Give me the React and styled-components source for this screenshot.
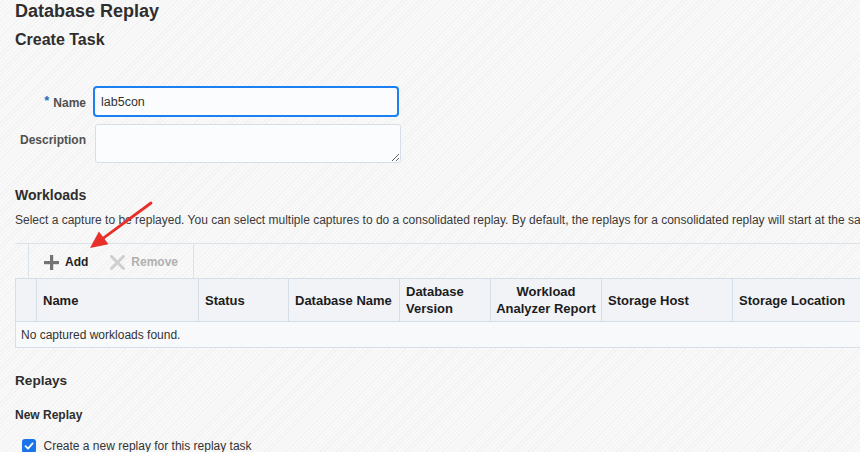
import React from 'react';
import styled, { createGlobalStyle } from 'styled-components';

const GlobalStyle = createGlobalStyle`
  html, body {
    margin: 0;
    padding: 0;
    overflow: hidden;
  }
  body {
    font-family: "Liberation Sans", Arial, Helvetica, sans-serif;
    color: #333;
    background-color: #f6f6f6;
    background-image: repeating-linear-gradient(
      135deg,
      #f9f9f9 0px,
      #f9f9f9 2px,
      #f2f2f2 2px,
      #f2f2f2 3px
    );
  }
`;

const Page = styled.div`
  position: relative;
  width: 860px;
  height: 452px;
  overflow: hidden;
  padding-left: 15px;
  box-sizing: border-box;
`;

const Title = styled.h1`
  margin: 0;
  font-size: 18px;
  line-height: 22px;
  font-weight: bold;
  color: #2e2e2e;
`;

const SubTitle = styled.h2`
  margin: 7.5px 0 0;
  font-size: 16px;
  line-height: 20px;
  font-weight: bold;
  color: #2e2e2e;
`;

const Form = styled.div`
  display: grid;
  grid-template-columns: 71px 310px;
  column-gap: 7px;
  row-gap: 7px;
  margin-top: 36.5px;
  margin-left: -15px;
  padding-left: 15px;
`;

const Label = styled.label`
  font-size: 12px;
  font-weight: bold;
  color: #505050;
  text-align: right;
  align-self: ${p => (p.top ? 'start' : 'center')};
  padding-top: ${p => (p.top ? '9px' : '0')};
  white-space: nowrap;
`;

const Required = styled.span`
  color: #1c6fc2;
  font-size: 13px;
  margin-right: 4px;
  vertical-align: 2px;
`;

const TextInput = styled.input`
  width: 306px;
  height: 31px;
  box-sizing: border-box;
  border: 2px solid #1c80f2;
  border-radius: 4px;
  background: #fbfcfe;
  padding: 0 6px;
  font-family: inherit;
  font-size: 12.5px;
  color: #333;
  outline: none;
`;

const TextArea = styled.textarea`
  width: 306px;
  height: 38.5px;
  box-sizing: border-box;
  margin-left: 1.5px;
  border: 1px solid #d8dee5;
  border-radius: 3px;
  background: #fbfcfe;
  font-family: inherit;
  outline: none;
  display: block;
`;

const SectionTitle = styled.h3`
  margin: ${p => p.mt}px 0 0;
  font-size: ${p => p.size || 14}px;
  line-height: 18px;
  font-weight: bold;
  color: #2e2e2e;
`;

const Hint = styled.p`
  margin: 8.2px 0 0;
  font-size: 12px;
  line-height: 16px;
  color: #3a3a3a;
  white-space: nowrap;
`;

const Toolbar = styled.div`
  display: flex;
  height: 35.5px;
  margin-top: 14.4px;
  width: 1000px;
  border-top: 1px solid #dbe2e8;
  box-sizing: border-box;
`;

const ToolbarLead = styled.div`
  width: 13px;
  border-right: 1px solid #dbe2e8;
`;

const ToolGroup = styled.div`
  display: flex;
  align-items: center;
  gap: 22px;
  padding: 2px 15px 0 15px;
  border-right: 1px solid #dbe2e8;
`;

const ToolButton = styled.button`
  display: flex;
  align-items: center;
  gap: 6px;
  padding: 0;
  border: none;
  background: none;
  font-family: inherit;
  font-size: 12px;
  font-weight: bold;
  color: ${p => (p.disabled ? '#b0b0b0' : '#1e1e1e')};
  cursor: ${p => (p.disabled ? 'default' : 'pointer')};
`;

const Table = styled.table`
  border-collapse: collapse;
  table-layout: fixed;
  width: 917px;
  border: 1px solid #d6dfe7;
`;

const HeadCell = styled.th`
  height: 43px;
  padding: 0 ${p => (p.center ? 5 : 6)}px;
  background: #f1f3f7;
  border-right: 1px solid #d6dfe7;
  border-bottom: 1px solid #d6dfe7;
  font-size: 13px;
  line-height: 17px;
  font-weight: bold;
  color: #1c1c1c;
  text-align: ${p => (p.center ? 'center' : 'left')};
  vertical-align: middle;
  box-sizing: border-box;
`;

const EmptyCell = styled.td`
  height: 26px;
  padding: 0 5px;
  background: #f8f9fb;
  font-size: 12px;
  color: #333;
  box-sizing: border-box;
`;

const CheckRow = styled.label`
  display: flex;
  align-items: center;
  gap: 7.5px;
  margin-top: 14.2px;
  padding-left: 7px;
  font-size: 12px;
  line-height: 15px;
  color: #333;
`;

const CheckBox = styled.span`
  width: 14px;
  height: 14px;
  border-radius: 3px;
  background: #1a73e8;
  display: flex;
  align-items: center;
  justify-content: center;
`;

const Overlay = styled.svg`
  position: absolute;
  left: 0;
  top: 0;
  pointer-events: none;
`;

const PlusIcon = () => (
  <svg width="15" height="15" viewBox="0 0 15 15">
    <rect x="6" y="0" width="3.2" height="15" fill="#747474" />
    <rect x="0" y="6" width="15" height="3.2" fill="#747474" />
  </svg>
);

const CrossIcon = () => (
  <svg width="15" height="15" viewBox="0 0 15 15">
    <path d="M1.5 1.5 L13.5 13.5 M13.5 1.5 L1.5 13.5" stroke="#cfcfcf" strokeWidth="3" strokeLinecap="square" />
  </svg>
);

const columns = [
  { w: 21, label: '' },
  { w: 162, label: 'Name' },
  { w: 90, label: 'Status' },
  { w: 111, label: 'Database Name' },
  { w: 91, label: <>Database<br />Version</> },
  { w: 111, label: <>Workload<br />Analyzer Report</>, center: true },
  { w: 131, label: 'Storage Host' },
  { w: 200, label: 'Storage Location' },
];

const App = () => (
  <>
    <GlobalStyle />
    <Page>
      <Title>Database Replay</Title>
      <SubTitle>Create Task</SubTitle>

      <Form>
        <Label><Required>*</Required>Name</Label>
        <TextInput defaultValue="lab5con" />
        <Label top>Description</Label>
        <TextArea />
      </Form>

      <SectionTitle mt={23.7}>Workloads</SectionTitle>
      <Hint>
        Select a capture to be replayed. You can select multiple captures to do a consolidated replay. By default, the replays for a consolidated replay will start at the same time.
      </Hint>

      <Toolbar>
        <ToolbarLead />
        <ToolGroup>
          <ToolButton><PlusIcon />Add</ToolButton>
          <ToolButton disabled><CrossIcon />Remove</ToolButton>
        </ToolGroup>
      </Toolbar>

      <Table>
        <colgroup>
          {columns.map((c, i) => <col key={i} style={{ width: c.w }} />)}
        </colgroup>
        <thead>
          <tr>
            {columns.map((c, i) => (
              <HeadCell key={i} center={c.center}>{c.label}</HeadCell>
            ))}
          </tr>
        </thead>
        <tbody>
          <tr>
            <EmptyCell colSpan={columns.length}>No captured workloads found.</EmptyCell>
          </tr>
        </tbody>
      </Table>

      <SectionTitle mt={23.7} size={13.6}>Replays</SectionTitle>
      <SectionTitle mt={16.4} size={12}>New Replay</SectionTitle>

      <CheckRow>
        <CheckBox>
          <svg width="10" height="10" viewBox="0 0 10 10">
            <path d="M1.5 5.2 L4 7.6 L8.6 2.4" fill="none" stroke="#fff" strokeWidth="1.8" strokeLinecap="round" strokeLinejoin="round" />
          </svg>
        </CheckBox>
        Create a new replay for this replay task
      </CheckRow>

      <Overlay width="860" height="452">
        <line x1="151" y1="203" x2="103.7" y2="237.9" stroke="#e8302a" strokeWidth="2.8" strokeLinecap="round" />
        <polygon points="90,248 108.5,244.3 98.9,231.5" fill="#e8302a" />
      </Overlay>
    </Page>
  </>
);

export default App;
